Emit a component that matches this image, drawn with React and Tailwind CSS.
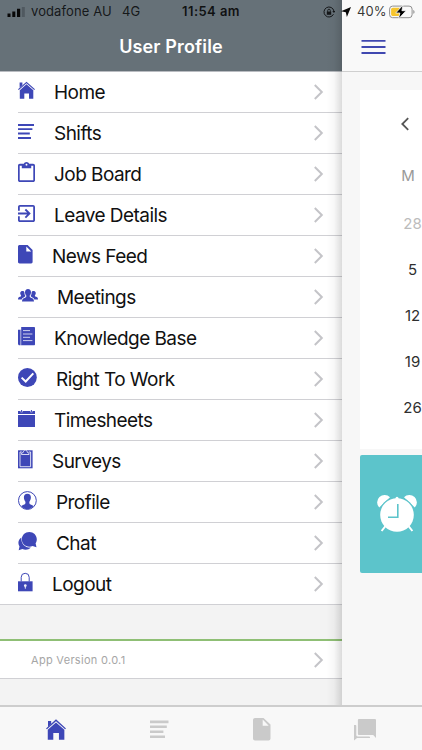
const FONT = "font-[Inter,'Liberation_Sans',sans-serif]"

const svgProps = (w, h = 20) => ({
  width: w,
  height: h,
  viewBox: `0 0 ${w} ${h}`,
  fill: 'currentColor',
  className: 'shrink-0 overflow-visible',
})

const HomeIcon = () => (
  <svg {...svgProps(17)}>
    <path d="M1.600 1.600h2.800v2.600l-2.800 2.500z" />
    <path d="M8.500.8 17 8.300l-.8.800L8.500 2.300.8 9.100 0 8.300z" />
    <path d="M8.500 3.200 15.300 9.200V17.800H11v-5.400H6.300v5.400H1.800V9.200z" />
  </svg>
)

const LinesIcon = () => (
  <svg {...svgProps(17)}>
    <path d="M0 2h16v1.900H0zM0 6.200h14.400v1.900H0zM0 10.600h11.800v1.900H0zM0 15h13v1.900H0z" />
  </svg>
)

const ClipboardIcon = () => (
  <svg width="17" height="20" viewBox="3 0 18 22" preserveAspectRatio="none" fill="currentColor" className="shrink-0 relative -top-px">
    <path d="M19 2h-4.180C14.400.84 13.300 0 12 0c-1.300 0-2.400.84-2.820 2H5c-1.100 0-2 .9-2 2v16c0 1.100.9 2 2 2h14c1.100 0 2-.9 2-2V4c0-1.100-.9-2-2-2zm-7 0c.55 0 1 .45 1 1s-.45 1-1 1-1-.45-1-1 .45-1 1-1zm7.200 18.200H4.800V4H7v3h10V4h2.200v16.200z" />
  </svg>
)

const LeaveIcon = () => (
  <svg {...svgProps(17)}>
    <g transform="translate(-2.83 -1.8) scale(.944)">
      <path d="M10.09 15.59 11.5 17l5-5-5-5-1.410 1.410L12.670 11H3v2h9.670l-2.580 2.590zM19 3H5c-1.110 0-2 .9-2 2v4h1.900V4.900h14.200v14.200H4.900V15H3v4c0 1.100.89 2 2 2h14c1.100 0 2-.9 2-2V5c0-1.100-.9-2-2-2z" />
    </g>
  </svg>
)

const FileIcon = () => (
  <svg {...svgProps(15)}>
    <path fillRule="evenodd" d="M1.600 0h8L14.600 5v12c0 .8-.6 1.400-1.400 1.400H1.600C.7 18.400 0 17.800 0 17V1.500C0 .7.700 0 1.600 0zM8.300 1.500v5h5z" />
  </svg>
)

const PeopleIcon = () => (
  <svg {...svgProps(20)}>
    <path d="M10 3c1.900 0 3 1.300 3 3.200 0 1.400-.6 2.600-1.300 3.400-.2 1.100.1 1.700 1.200 2.100 1.800.6 3.100 1 3.100 3.900H4c0-2.900 1.300-3.300 3.100-3.900 1.100-.4 1.400-1 1.200-2.100C7.600 8.800 7 7.600 7 6.200 7 4.300 8.100 3 10 3z" />
    <path d="M4.500 5c1 0 1.700.5 1.900 1.400-.1 1.300.2 2.300.9 3.400.1.700-.3 1-1.300 1.400-1.200.5-2 1-2.300 2.200H0c0-1.900.8-2.200 2-2.600 1-.4 1.300-.7 1-1.500-.7-.9-.9-1.700-.7-2.700C2.500 5.500 3.300 5 4.500 5zM15.500 5c-1 0-1.700.5-1.900 1.400.1 1.300-.2 2.300-.9 3.400-.1.700.3 1 1.300 1.400 1.200.5 2 1 2.300 2.200H20c0-1.900-.8-2.200-2-2.600-1-.4-1.300-.7-1-1.500.7-.9.900-1.700.7-2.700C17.500 5.500 16.700 5 15.500 5z" />
  </svg>
)

const BookIcon = () => (
  <svg {...svgProps(17)}>
    <path d="M3.200 0h13c.5 0 .8.300.8.800v16.500c0 .6-.4 1-1 1H3.200z" />
    <path d="M0 2.800h2.200v15.500H1.500c-.9 0-1.500-.6-1.500-1.500z" />
    <path d="M2.200 2.800h1v15.500h-1z" opacity=".55" />
    <path d="M5 3.600h7M5 7h9.400M5 10.300h7M5 13.600h9.400" stroke="#fff" strokeWidth=".9" opacity=".85" />
  </svg>
)

const CheckIcon = () => (
  <svg {...svgProps(19)}>
    <circle cx="9.400" cy="9.500" r="9.400" />
    <path d="m3.600 9.600 4.100 3.900 7.600-8.100" stroke="#fff" strokeWidth="2" fill="none" />
  </svg>
)

const CalendarIcon = () => (
  <svg {...svgProps(17)}>
    <path d="M0 2h2.600v1.200h2V2h7.800v1.200h2V2H17v3H0zM0 6h17V18H0z" />
    <path d="M3.100 1h1v2h-1zM12.900 1h1v2h-1z" />
  </svg>
)

const SurveyIcon = () => (
  <svg {...svgProps(15)}>
    <path d="M0 .3h14.600v18H0z" />
    <path d="M3.800 2H2v14.700h10.600V2h-1.800" fill="none" stroke="#fff" strokeWidth=".8" />
    <path d="M3.500 4.500V3.300L5.300 2.300C5.500.8 6.300.1 7.300.1s1.800.7 2 2.200l1.800 1v1.200z" stroke="#fff" strokeWidth=".8" />
  </svg>
)

const ProfileIcon = () => (
  <svg {...svgProps(19)}>
    <circle cx="9.400" cy="9.500" r="8.900" fill="none" stroke="currentColor" strokeWidth="1" />
    <path d="M9.400 2.800c2.300 0 3.600 1.400 3.500 3.700-.1 1.800-.6 3.100-1.500 4.200-.2 1.700 0 2.300 1.300 2.800 1.100.4 2.100.8 2.900 1.600-1.500 1.900-3.700 3.100-6.200 3.100s-4.700-1.200-6.200-3.100c.8-.8 1.800-1.200 2.900-1.600 1.300-.5 1.500-1.100 1.300-2.800-.9-1.100-1.400-2.400-1.500-4.200-.1-2.300 1.200-3.700 3.500-3.700z" />
  </svg>
)

const ChatIcon = () => (
  <svg {...svgProps(19)}>
    <path d="M3.300 5.500C1.200 7 .4 9 .4 11c0 1.300.4 2.500 1.100 3.500L.7 18.300l3.700-1.200c1 .5 2 .7 3.200.7 2 0 3.900-.8 5.200-2.200C7 15.800 3 12 3.300 5.500z" />
    <path d="M11.300-.1c4.200 0 7.500 3.200 7.500 7.300 0 1.600-.5 3-1.200 4.100l.9 4-3.900-1.300c-1 .5-2.100.7-3.300.7-4.200 0-7.500-3.200-7.500-7.400S7.100-.1 11.300-.1z" />
  </svg>
)

const LockIcon = () => (
  <svg {...svgProps(15)}>
    <path d="M3.200 8.500V4.300a4 4 0 0 1 8 0v4.200" fill="none" stroke="currentColor" strokeWidth="1" />
    <path d="M0 8.300h14.600v10H0z" />
    <path d="M7.300 11.300a1.300 1.300 0 0 1 .6 2.500l-.2 2h-.8l-.2-2a1.300 1.300 0 0 1 .6-2.500z" fill="#fff" opacity=".9" />
  </svg>
)

const Chevron = () => (
  <svg width="10" height="16" viewBox="0 0 10 16" fill="none" className="shrink-0">
    <path d="m.8 1 7 7-7 7" stroke="#c4c4c8" strokeWidth="2" />
  </svg>
)

const MENU = [
  { label: 'Home',           Icon: HomeIcon },
  { label: 'Shifts',         Icon: LinesIcon },
  { label: 'Job Board',      Icon: ClipboardIcon },
  { label: 'Leave Details',  Icon: LeaveIcon },
  { label: 'News Feed',      Icon: FileIcon },
  { label: 'Meetings',       Icon: PeopleIcon },
  { label: 'Knowledge Base', Icon: BookIcon },
  { label: 'Right To Work',  Icon: CheckIcon },
  { label: 'Timesheets',     Icon: CalendarIcon },
  { label: 'Surveys',        Icon: SurveyIcon },
  { label: 'Profile',        Icon: ProfileIcon },
  { label: 'Chat',           Icon: ChatIcon },
  { label: 'Logout',         Icon: LockIcon },
]

const DAYS = ['5', '12', '19', '26']

function StatusBar() {
  return (
    <div className="absolute inset-x-0 top-0 h-6 flex items-center text-[13px] text-black/80 whitespace-nowrap">
      <svg width="18" height="10" viewBox="0 0 18 10" className="ml-[7px] shrink-0">
        <path d="M.5 6.500h3V10h-3zM5.300 4.500h3V10h-3zM10 1.700h3.200V10H10z" fill="#080808" />
        <path d="M14.800 0h3v10h-3z" fill="#505960" />
      </svg>
      <span className="ml-[6px] w-[91px] tracking-[0.1px]">vodafone AU</span>
      <span className="w-[60px]">4G</span>
      <span className="w-[141px] font-semibold tracking-[0.45px] text-black/85">11:54 am</span>
      <svg width="12" height="12" viewBox="0 0 12 12" fill="none" className="shrink-0">
        <path d="M10.900 5A5 5 0 1 0 10.500 8.200" stroke="#151719" strokeWidth="1" />
        <path d="m9.300 5 3.200 0-1.600 2z" fill="#151719" />
        <path d="M3.800 5.600h4.400v3.200H3.800z" fill="#151719" />
        <path d="M4.700 6V4.500a1.300 1.300 0 0 1 2.600 0V6" stroke="#151719" strokeWidth=".9" />
      </svg>
      <svg width="10" height="10" viewBox="0 0 10 10" className="ml-[6px] shrink-0">
        <path d="M10 0 5.900 10 4.800 5.200 0 4.300z" fill="#080808" />
      </svg>
      <span className="ml-[6px] w-[32px] tracking-[0.1px]">40%</span>
      <svg width="27" height="16" viewBox="0 0 27 16" className="shrink-0">
        <rect x=".6" y="2.100" width="22.500" height="11.600" rx="3" fill="none" stroke="#8f8f8f" strokeWidth="1" />
        <path d="M4 3.700h6.500v8.400H4c-1.100 0-1.900-.7-1.900-1.800V5.500c0-1.100.8-1.800 1.900-1.800z" fill="#f7c52d" />
        <path d="M24.300 6v3.800c.8-.3 1.200-1 1.200-1.900S25.100 6.300 24.300 6z" fill="#8f8f8f" />
        <path d="M14 1 6.700 9h4.200L9.400 15l7.700-8.300h-4.200z" fill="#000" stroke="#f8f8f8" strokeWidth=".8" />
      </svg>
    </div>
  )
}

function Drawer() {
  return (
    <div className="relative w-[342px] shrink-0 flex flex-col bg-[#f3f3f3]">
      <div className="h-[72px] shrink-0 bg-[#667178] border-b border-[#b9bcc1] pt-[35px] text-center text-[18px] leading-6 font-semibold tracking-[0.15px] text-white">
        User Profile
      </div>

      <div className="bg-white border-b border-[#d0d0d4]">
        {MENU.map(({ label, Icon }, i) => (
          <div key={label} className="flex pl-[18px]">
            <div
              className={`flex-1 flex items-start pt-[9px] pr-[18px] ${
                i < MENU.length - 1 ? 'h-[41px] border-b border-[#d0d0d4]' : 'h-[40px]'
              }`}
            >
              <span className="text-[#3e47b7]"><Icon /></span>
              <span className="flex-1 ml-[19px] pt-px text-[19px] leading-[22px] tracking-[-0.55px] text-[#111]">{label}</span>
              <span className="pt-[3px]"><Chevron /></span>
            </div>
          </div>
        ))}
      </div>

      {/* version row */}
      <div className="mt-[34px] h-[40px] flex items-center justify-between bg-white border-t-2 border-t-[#8fbf75] border-b border-b-[#d0d0d4] pl-[31px] pr-[18px]">
        <span className="pt-px text-[11px] tracking-[0.3px] text-[#a6a6a6]">App Version 0.0.1</span>
        <Chevron />
      </div>

      {/* shade cast by the page */}
      <div className="absolute right-0 top-0 bottom-0 w-4 bg-linear-to-r from-black/0 via-black/3 to-black/14" />
    </div>
  )
}

function Page() {
  return (
    <div className="flex-1 flex flex-col bg-[#f7f7f7] overflow-hidden">
      <div className="h-[72px] shrink-0 bg-[#f9f9f9] border-b border-[#cfcfcf] pl-[19px] pt-[39px]">
        <svg width="25" height="16" viewBox="0 0 25 16" stroke="#4048b0" strokeWidth="1.800">
          <path d="M.5 1.800h24M.5 8h24M.5 14h24" />
        </svg>
      </div>

      <div className="ml-[18px] mt-[18px] h-[359px] bg-white flex flex-col pl-[29px] text-[15px] text-[#2f2f2f]">
        <svg width="10" height="14" viewBox="0 0 10 14" fill="none" className="ml-[11px] mt-[27px] shrink-0">
          <path d="M8.200 1.200 2.300 7l5.900 5.800" stroke="#555" strokeWidth="1.800" />
        </svg>
        <div className="mt-[22px] h-[46px] w-[38px] text-center leading-[46px] text-[#999]">M</div>
        <div className="h-[46px] w-[47px] text-center leading-[50px] text-[#bcbcbc]">28</div>
        {DAYS.map(day => (
          <div key={day} className="h-[46px] w-[47px] text-center leading-[50px]">{day}</div>
        ))}
      </div>

      <div className="ml-[18px] mt-[6px] h-[118px] bg-[#5cc4cb] rounded-l-[2px] pl-[17px] pt-[39px]">
        <svg width="40" height="40" viewBox="0 0 40 40" fill="none">
          <path d="M2.200 13.500A6.800 6.800 0 0 1 13 3.200zM37.800 13.500A6.800 6.800 0 0 0 27 3.200z" fill="#fff" />
          <circle cx="20" cy="21" r="18" fill="#5cc4cb" />
          <path d="m8.500 32-3.900 5M31.500 32l3.900 5" stroke="#fff" strokeWidth="2" />
          <circle cx="20" cy="21" r="16.800" fill="#fff" />
          <circle cx="20" cy="4.300" r="1.500" fill="#fff" />
          <path d="M20.800 10v13.200H11" stroke="#5cc4cb" strokeWidth="1.600" />
        </svg>
      </div>
    </div>
  )
}

function TabBar() {
  return (
    <div className="h-[45px] shrink-0 flex border-t-2 border-[#cdcdcd] bg-[#f8f8f8] text-[#cacaca]">
      <div className="w-[111px] pl-[46px] pt-[12px] text-[#3e47b7]">
        <svg width="20" height="22" viewBox="0 0 17 18.700" fill="currentColor">
          <path d="M1.700 1.600h2.700v2.600l-2.700 2.500z" />
          <path d="M8.500.3 17 8l-.8.800L8.500 1.900.8 8.800 0 8z" />
          <path d="M8.500 3 15.600 9.200v8.400H11v-5.600H6.200v5.600H1.500V9.200z" />
        </svg>
      </div>
      <div className="w-[103px] pl-[39px] pt-[13px]">
        <svg width="19" height="19" viewBox="0 0 19 19" fill="currentColor">
          <path d="M0 .6h18.500v2.600H0zM0 5.600h16.800V8H0zM0 10.600h13.400V13H0zM0 15.600h15V18H0z" />
        </svg>
      </div>
      <div className="w-[103px] pl-[39px] pt-[11px]">
        <svg width="18" height="23" viewBox="0 0 18 23" fill="currentColor">
          <path fillRule="evenodd" d="M2 0h8.500l7 6.500v14c0 1.100-.9 2-2 2H2c-1.100 0-2-.9-2-2V2C0 .9.900 0 2 0zM9.700 1.500v6.300h6z" />
        </svg>
      </div>
      <div className="flex-1 pl-[37px] pt-[12px]">
        <svg width="22" height="22" viewBox="0 0 22 22" fill="currentColor">
          <path d="M5.200 0h15.500c.8 0 1.300.5 1.300 1.300V19l-2.800-3H5.200c-.8 0-1.300-.5-1.300-1.300V1.300C3.900.5 4.400 0 5.200 0z" />
          <path d="M0 6h1.300c.7 0 1 .3 1 1v9c0 .9.400 1.400 1.300 1.400H15c.7 0 1 .3 1 .8v.8H3L0 21.600z" />
        </svg>
      </div>
    </div>
  )
}

export default function App() {
  return (
    <div className={`relative w-[422px] h-[750px] flex flex-col overflow-hidden ${FONT}`}>
      <div className="flex-1 min-h-0 flex">
        <Drawer />
        <Page />
      </div>
      <TabBar />
      <StatusBar />
    </div>
  )
}
